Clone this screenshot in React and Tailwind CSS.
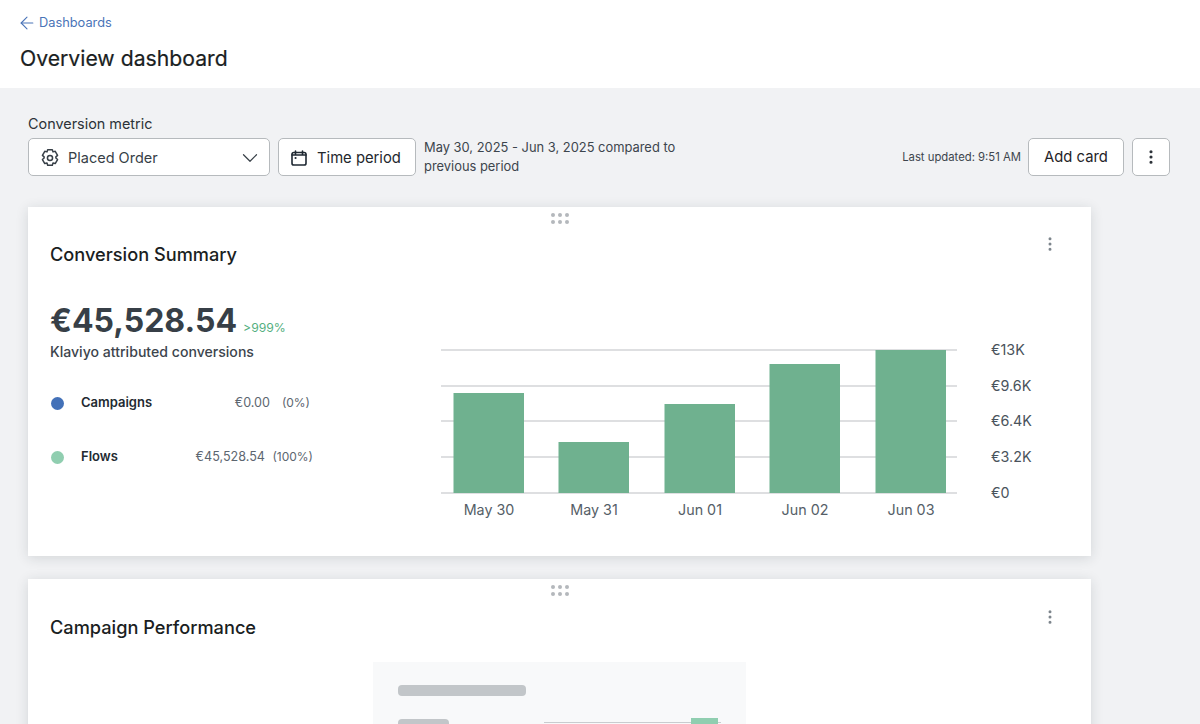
import { ArrowLeft, ChevronDown, EllipsisVertical } from "lucide-react";

const bars = [
  { label: "May 30", x: 13, top: 393 },
  { label: "May 31", x: 118, top: 442 },
  { label: "Jun 01", x: 224, top: 404 },
  { label: "Jun 02", x: 329, top: 364 },
  { label: "Jun 03", x: 435, top: 350 },
];
const ticks = [
  { label: "€13K", y: 350 },
  { label: "€9.6K", y: 386 },
  { label: "€6.4K", y: 421 },
  { label: "€3.2K", y: 457 },
  { label: "€0", y: 493 },
];

function Grip() {
  return (
    <div className="grid grid-cols-3 gap-x-[3px] gap-y-[3px] w-[18px] mx-auto">
      {[0, 1, 2, 3, 4, 5].map((i) => (
        <span key={i} className="w-1 h-1 rounded-full bg-[#b4b8bc]" />
      ))}
    </div>
  );
}

function GearIcon() {
  return (
    <svg width="20" height="20" viewBox="0 0 18 18" fill="none" stroke="#373f47" strokeWidth="1.35" strokeLinejoin="round">
      <path d="M6.9 1.5h4.2l.6 2 2-.5 2.1 3.6-1.5 1.4 0 1 1.5 1.4-2.1 3.6-2-.5-.6 2H6.9l-.6-2-2 .5-2.1-3.6 1.5-1.4 0-1-1.5-1.4 2.1-3.6 2 .5z" />
      <circle cx="9" cy="9" r="2.3" />
    </svg>
  );
}

function CalendarIcon() {
  return (
    <svg width="16" height="16" viewBox="0 0 16 16" fill="none" stroke="#1f2933" strokeWidth="1.6" strokeLinecap="round">
      <rect x="1" y="2.5" width="14" height="12.5" rx="1.8" />
      <path d="M4.5 1v3M11.5 1v3M1 5h14" />
      <path d="M4.5 8h.1" strokeWidth="2" />
    </svg>
  );
}

function LegendRow({ color, name, value, pct, pctWidth, className }) {
  return (
    <div className={`flex items-center h-5 text-[12.6px] ${className}`}>
      <span className={`ml-px w-[13px] h-[13px] rounded-full ${color}`} />
      <span className="ml-[17px] text-[13px] font-semibold text-[#232a31]">{name}</span>
      <span className="ml-auto text-[#5c6670]">{value}</span>
      <span className={`text-right text-[12px] text-[#5c6670] ${pctWidth}`}>{pct}</span>
    </div>
  );
}

function Chart() {
  return (
    <svg width="600" height="180" viewBox="441 342 600 180" className="font-['Inter',sans-serif]">
      {ticks.map((t) => (
        <g key={t.label}>
          <line x1="441" x2="957" y1={t.y} y2={t.y} stroke="#d3d5d7" strokeWidth="1.3" />
          <text x="991" y={t.y + 5} fontSize="14.3" fill="#4a535c">{t.label}</text>
        </g>
      ))}
      {bars.map((b) => (
        <g key={b.label}>
          <rect x={441 + b.x - 0.5} y={b.top} width="70.5" height={493 - b.top} fill="#6fb18f" />
          <text x={441 + b.x + 35} y="515" fontSize="14.3" textAnchor="middle" fill="#555e67">{b.label}</text>
        </g>
      ))}
    </svg>
  );
}

export default function App() {
  return (
    <div className="h-[724px] overflow-hidden bg-[#f1f2f4] font-['Inter',sans-serif] text-[#1f2327]">
      <header className="h-[88px] bg-white px-5 pt-[14px]">
        <a className="flex items-center gap-[2px] h-[18px] -ml-[3px] text-[12.8px] text-[#4a74b8]">
          <ArrowLeft size={20} strokeWidth={1.3} />
          Dashboards
        </a>
        <h1 className="mt-[11px] text-[21.2px] leading-[30px] font-normal text-[#1a1e22] [-webkit-text-stroke:0.2px]">
          Overview dashboard
        </h1>
      </header>

      <main className="pl-7 pr-[30px] pt-[27px]">
        <div className="text-[14.4px] leading-[18px] text-[#2c3238]">Conversion metric</div>
        <div className="flex items-center mt-[5px] h-[38px]">
          <button className="flex items-center w-[242px] h-[38px] pl-[11px] pr-[6px] pt-px bg-white border border-[#b6babd] rounded-[5px] text-[14.5px] text-[#373f47]">
            <GearIcon />
            <span className="ml-[8px]">Placed Order</span>
            <ChevronDown size={26} strokeWidth={1.1} className="ml-auto" />
          </button>
          <button className="flex items-center ml-2 w-[138px] h-[38px] pl-[12px] pt-[2px] bg-white border border-[#b6babd] rounded-[5px] text-[14.8px] text-[#23282d]">
            <CalendarIcon />
            <span className="ml-[10px]">Time period</span>
          </button>
          <p className="ml-2 w-[270px] text-[12.9px] leading-[19px] text-[#3d454d]">
            May 30, 2025 - Jun 3, 2025 compared to previous period
          </p>
          <span className="ml-auto mt-px text-[11.3px] text-[#3d454d]">Last updated: 9:51 AM</span>
          <button className="ml-[7px] w-[96px] h-[38px] pt-px bg-white border border-[#b6babd] rounded-[5px] text-[14.8px] text-[#1f2327]">
            Add card
          </button>
          <button className="flex items-center justify-center ml-2 w-[38px] h-[38px] bg-white border border-[#b6babd] rounded-[5px]">
            <EllipsisVertical size={18} strokeWidth={2.2} className="text-[#2c3238]" />
          </button>
        </div>

        <section className="mt-[31px] w-[1063px] h-[349px] bg-white shadow-[0_2px_12px_rgba(30,40,50,0.14)] pt-[6px] px-[22px]">
          <Grip />
          <div className="flex items-start justify-between mt-[14px]">
            <h2 className="mt-[2px] text-[18.2px] leading-[28px] font-medium text-[#1a1e22]">Conversion Summary</h2>
            <EllipsisVertical size={18} strokeWidth={2} className="text-[#7d858c] mt-[-3px] mr-[10px]" />
          </div>
          <div className="flex mt-[10px]">
            <div className="w-[263px] shrink-0">
              <div className="flex items-baseline mt-[22px]">
                <span className="text-[32px] leading-[42px] font-bold text-[#373f47]">€45,528.54</span>
                <span className="ml-[6px] text-[12.2px] text-[#55b07f]">&gt;999%</span>
              </div>
              <div className="text-[14.1px] leading-5 font-medium text-[#3d454d]">Klaviyo attributed conversions</div>
              <LegendRow className="mt-[31px]" color="bg-[#4371b8]" name="Campaigns" value="€0.00" pct="(0%)" pctWidth="w-[43px] pr-[3px]" />
              <LegendRow className="mt-[34px]" color="bg-[#90ceb0]" name="Flows" value="€45,528.54" pct="(100%)" pctWidth="w-[48px]" />
            </div>
            <div className="ml-[128px] mt-[64px]">
              <Chart />
            </div>
          </div>
        </section>

        <section className="mt-[23px] w-[1063px] h-[300px] bg-white shadow-[0_2px_12px_rgba(30,40,50,0.14)] pt-[6px] px-[22px]">
          <Grip />
          <div className="flex items-start justify-between mt-[14px]">
            <h2 className="mt-[3px] text-[18.2px] leading-[28px] font-medium text-[#1a1e22]">Campaign Performance</h2>
            <EllipsisVertical size={18} strokeWidth={2} className="text-[#7d858c] mt-[-2px] mr-[10px]" />
          </div>
          <div className="ml-[323px] mt-[21px] w-[373px] h-[200px] bg-[#f8f9fa] pt-[23px] px-[25px]">
            <div className="w-[128px] h-[11px] rounded-[4px] bg-[#c2c6c9]" />
            <div className="flex items-start mt-[23px]">
              <div className="w-[53px] h-[12px] rounded-[4px] bg-[#c2c6c9]" />
              <div className="relative ml-[95px] w-[184px] mt-[3px] h-px bg-[#c9cccf]">
                <div className="absolute left-[147px] top-[-4px] w-[27px] h-[20px] bg-[#90ceb0]" />
              </div>
            </div>
          </div>
        </section>
      </main>
    </div>
  );
}
